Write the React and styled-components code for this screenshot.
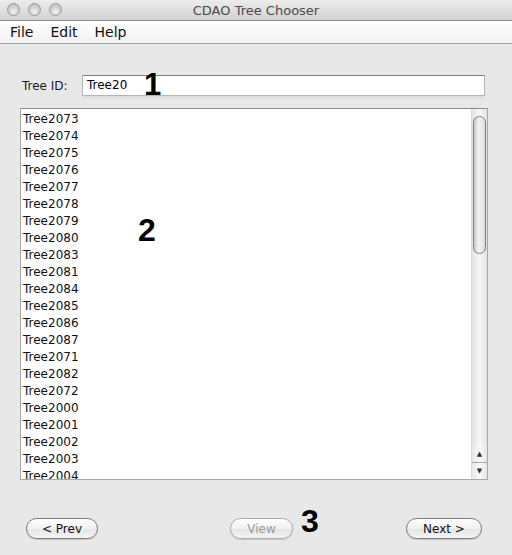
import React from 'react';
import styled, { createGlobalStyle } from 'styled-components';

const GlobalStyle = createGlobalStyle`
	html, body {
		margin: 0;
		padding: 0;
		background: #e8e8e8;
	}
	body {
		font-family: "DejaVu Sans", "Liberation Sans", sans-serif;
	}
`;

const trees = [
	'Tree2073', 'Tree2074', 'Tree2075', 'Tree2076', 'Tree2077', 'Tree2078',
	'Tree2079', 'Tree2080', 'Tree2083', 'Tree2081', 'Tree2084', 'Tree2085',
	'Tree2086', 'Tree2087', 'Tree2071', 'Tree2082', 'Tree2072', 'Tree2000',
	'Tree2001', 'Tree2002', 'Tree2003', 'Tree2004'
];

const Window = styled.div`
	width: 512px;
	height: 555px;
	display: flex;
	flex-direction: column;
	background: #e8e8e8;
	overflow: hidden;
`;

const TitleBar = styled.div`
	height: 21px;
	flex-shrink: 0;
	position: relative;
	display: flex;
	align-items: center;
	justify-content: center;
	background: linear-gradient(#ececec, #d2d2d2);
	border-bottom: 1px solid #8f8f8f;
	box-sizing: border-box;
`;

const Lights = styled.div`
	position: absolute;
	left: 7px;
	top: 3px;
	display: flex;
	gap: 8px;
`;

const Light = styled.span`
	width: 13px;
	height: 13px;
	border-radius: 50%;
	box-sizing: border-box;
	border: 1px solid #9a9a9a;
	background: radial-gradient(circle at 50% 70%, #f4f4f4 0%, #d4d4d4 45%, #b4b4b4 100%);
`;

const Title = styled.div`
	font-size: 13px;
	color: #4a4a4a;
`;

const MenuBar = styled.div`
	height: 23px;
	flex-shrink: 0;
	display: flex;
	align-items: center;
	padding-left: 10px;
	gap: 17px;
	background: linear-gradient(#ffffff, #f2f2f2);
	border-bottom: 1px solid #a3a3a3;
	box-sizing: border-box;
`;

const MenuItem = styled.span`
	font-size: 14px;
	color: #111;
`;

const Content = styled.div`
	display: flex;
	flex-direction: column;
	padding: 31px 24px 0 20px;
`;

const IdRow = styled.div`
	position: relative;
	display: flex;
	align-items: center;
	padding-left: 2px;
`;

const Label = styled.label`
	width: 60px;
	font-size: 12px;
	color: #1a1a1a;
`;

const IdInput = styled.div`
	width: 403px;
	height: 21px;
	box-sizing: border-box;
	border: 1px solid #b5b5b5;
	border-top-color: #808080;
	background: #fff;
	font-size: 12px;
	line-height: 19px;
	padding-left: 4px;
	color: #000;
	box-shadow: 0 3px 0 #dedede;
`;

const Marker = styled.span`
	position: absolute;
	left: ${p => p.$x}px;
	top: ${p => p.$y}px;
	font-family: "Liberation Sans", Arial, sans-serif;
	font-weight: bold;
	font-size: ${p => p.$size || 31}px;
	line-height: 1;
	color: #000;
`;

const ListBox = styled.div`
	position: relative;
	margin-top: 12px;
	height: 372px;
	width: 468px;
	box-sizing: border-box;
	border: 1px solid #a8a8a8;
	border-top-color: #8e8e8e;
	background: #fff;
	display: flex;
	overflow: hidden;
`;

const Items = styled.div`
	flex: 1;
	padding: 2px 0 0 2px;
`;

const Item = styled.div`
	height: 17px;
	line-height: 17px;
	font-size: 12px;
	color: #111;
	white-space: nowrap;
`;

const ScrollTrack = styled.div`
	width: 16px;
	flex-shrink: 0;
	display: flex;
	flex-direction: column;
	border-left: 1px solid #dcdcdc;
	background: linear-gradient(90deg, #e2e2e2, #f7f7f7 50%, #e2e2e2);
	padding-top: 7px;
	box-sizing: border-box;
`;

const Thumb = styled.div`
	margin: 0 1px;
	height: 138px;
	border-radius: 7px;
	box-sizing: border-box;
	border: 1px solid #7d7d7d;
	background: linear-gradient(90deg, #c9c9c9, #f4f4f4 45%, #dcdcdc);
`;

const TrackSpace = styled.div`
	flex: 1;
`;

const ArrowButton = styled.div`
	height: 16px;
	display: flex;
	align-items: center;
	justify-content: center;
	border-top: 1px solid ${p => (p.$divider ? '#a8a8a8' : 'transparent')};
	font-size: 7px;
	color: #333;
	background: linear-gradient(90deg, #e6e6e6, #fafafa 50%, #e6e6e6);
`;

const Footer = styled.div`
	position: relative;
	display: flex;
	align-items: center;
	margin-top: 38px;
	padding: 0 30px 0 26px;
`;

const Button = styled.button`
	height: 21px;
	width: ${p => p.$w}px;
	margin-left: ${p => p.$ml || 0};
	box-sizing: border-box;
	border: 1px solid ${p => (p.disabled ? '#a9a9a9' : '#7a7a7a')};
	border-radius: 11px;
	background: linear-gradient(#ffffff, #f1f1f1 50%, #e3e3e3 51%, #f5f5f5);
	font-family: "DejaVu Sans", "Liberation Sans", sans-serif;
	font-size: 12px;
	color: ${p => (p.disabled ? '#9a9a9a' : '#111')};
	padding: 0;
	box-shadow: 0 1px 1px rgba(0, 0, 0, 0.15);
`;

export default function App() {
	return (
		<Window>
			<GlobalStyle />
			<TitleBar>
				<Lights>
					<Light />
					<Light />
					<Light />
				</Lights>
				<Title>CDAO Tree Chooser</Title>
			</TitleBar>
			<MenuBar>
				<MenuItem>File</MenuItem>
				<MenuItem>Edit</MenuItem>
				<MenuItem>Help</MenuItem>
			</MenuBar>
			<Content>
				<IdRow>
					<Label>Tree ID:</Label>
					<IdInput>Tree20</IdInput>
					<Marker $x={124} $y={-6}>1</Marker>
				</IdRow>
				<ListBox>
					<Items>
						{trees.map(t => <Item key={t}>{t}</Item>)}
					</Items>
					<ScrollTrack>
						<Thumb />
						<TrackSpace />
						<ArrowButton>▲</ArrowButton>
						<ArrowButton $divider>▼</ArrowButton>
					</ScrollTrack>
					<Marker $x={117} $y={105} $size={32}>2</Marker>
				</ListBox>
			</Content>
			<Footer>
				<Button $w={72}>&lt; Prev</Button>
				<Button $w={63} $ml="132px" disabled>View</Button>
				<Marker $x={301} $y={-13} $size={32}>3</Marker>
				<Button $w={76} $ml="auto">Next &gt;</Button>
			</Footer>
		</Window>
	);
}
